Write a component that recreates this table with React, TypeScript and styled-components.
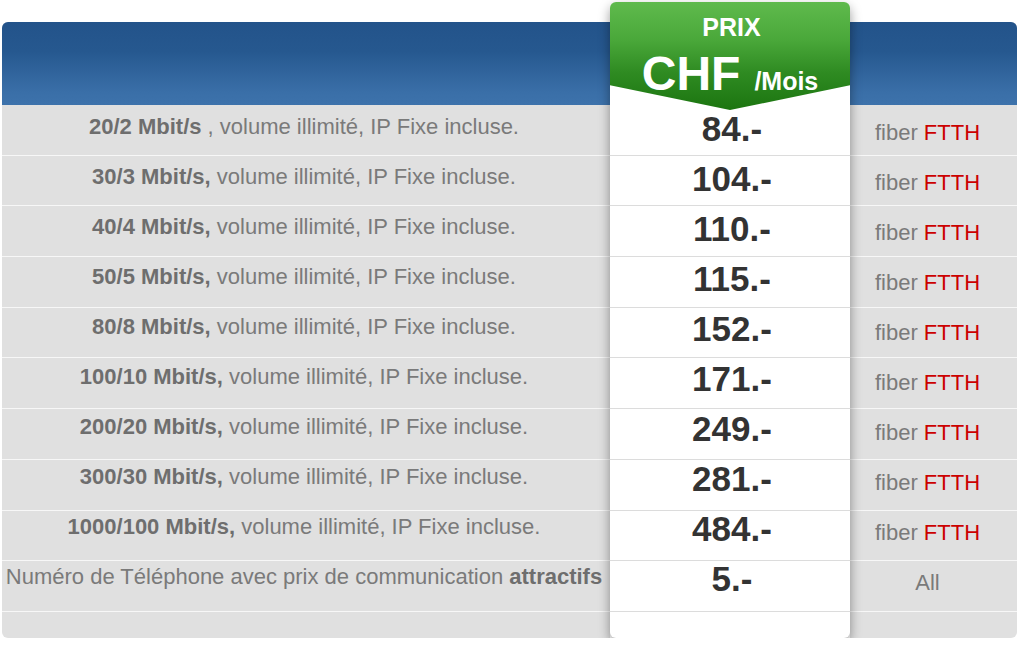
import React from "react";
import styled, { createGlobalStyle } from "styled-components";

const plans = [
  { speed: "20/2 Mbit/s", rest: " , volume illimité, IP Fixe incluse.", price: "84.-" },
  { speed: "30/3 Mbit/s,", rest: " volume illimité, IP Fixe incluse.", price: "104.-" },
  { speed: "40/4 Mbit/s,", rest: " volume illimité, IP Fixe incluse.", price: "110.-" },
  { speed: "50/5 Mbit/s,", rest: " volume illimité, IP Fixe incluse.", price: "115.-" },
  { speed: "80/8 Mbit/s,", rest: " volume illimité, IP Fixe incluse.", price: "152.-" },
  { speed: "100/10 Mbit/s,", rest: " volume illimité, IP Fixe incluse.", price: "171.-" },
  { speed: "200/20 Mbit/s,", rest: " volume illimité, IP Fixe incluse.", price: "249.-" },
  { speed: "300/30 Mbit/s,", rest: " volume illimité, IP Fixe incluse.", price: "281.-" },
  { speed: "1000/100 Mbit/s,", rest: " volume illimité, IP Fixe incluse.", price: "484.-" },
];

// text sits a little higher in each successive row
const drift = (base: number, i: number) => base - 1.4 * i;
const last = plans.length;

const App = () => {
  return (
    <>
      <GlobalStyle />
      <Page>
        <SideColumn $width={608} $side="left">
          <BlueHeader />
          {plans.map((p, i) => (
            <Cell key={p.speed} $shift={drift(-5, i)}>
              <span>
                <Strong>{p.speed}</Strong>
                {p.rest}
              </span>
            </Cell>
          ))}
          <Cell $shift={drift(-5, last)}>
            <span>
              Numéro de Téléphone avec prix de communication <Strong>attractifs</Strong>
            </span>
          </Cell>
          <FooterCell />
        </SideColumn>

        <PriceColumn>
          <PriceHeader>
            <PrixLabel>PRIX</PrixLabel>
            <CurrencyLine>
              <Currency>CHF</Currency>
              <Period>/Mois</Period>
            </CurrencyLine>
          </PriceHeader>
          {plans.map((p, i) => (
            <PriceCell key={p.price} $shift={drift(-2, i)}>
              {p.price}
            </PriceCell>
          ))}
          <PriceCell $shift={drift(-2, last)}>5.-</PriceCell>
          <PriceFooter />
        </PriceColumn>

        <SideColumn $width={167} $side="right">
          <BlueHeader />
          {plans.map((p, i) => (
            <Cell key={p.speed} $shift={drift(6, i)} $padRight={12}>
              <span>
                fiber <Red>FTTH</Red>
              </span>
            </Cell>
          ))}
          <Cell $shift={drift(6, last)} $padRight={12}>
            All
          </Cell>
          <FooterCell />
        </SideColumn>
      </Page>
    </>
  );
};

export default App;

// Styles

const GlobalStyle = createGlobalStyle`
  html, body {
    margin: 0;
    padding: 0;
    background: #fff;
  }
  body {
    font-family: "Liberation Sans", Arial, Helvetica, sans-serif;
  }
`;

const Page = styled.div`
  display: flex;
  align-items: flex-start;
  padding: 2px 0 0 2px;
  width: 1017px;
  box-sizing: border-box;
`;

const SideColumn = styled.div<{ $width: number; $side: "left" | "right" }>`
  width: ${(p) => p.$width}px;
  flex-shrink: 0;
  margin-top: 20px;
  background: #e0e0e0;
  overflow: hidden;
  border-radius: ${(p) => (p.$side === "left" ? "6px 0 0 6px" : "0 6px 6px 0")};
`;

const BlueHeader = styled.div`
  height: 83px;
  background: linear-gradient(to bottom, #23538a 0%, #26588f 35%, #3a6fa8 85%, #3d72ab 100%);
`;

const Cell = styled.div<{ $shift: number; $padRight?: number }>`
  height: 50.7px;
  box-sizing: border-box;
  border-bottom: 1px solid #f7f7f7;
  display: flex;
  align-items: center;
  justify-content: center;
  white-space: pre;
  font-size: 22px;
  color: #7a7a7a;
  padding-right: ${(p) => p.$padRight ?? 4}px;
  padding-top: ${(p) => (p.$shift > 0 ? p.$shift : 0)}px;
  padding-bottom: ${(p) => (p.$shift < 0 ? -p.$shift : 0)}px;
`;

const Strong = styled.b`
  font-weight: 700;
  color: #6e6e6e;
`;

const Red = styled.span`
  color: #cc0000;
`;

const FooterCell = styled.div`
  height: 26px;
`;

const PriceColumn = styled.div`
  position: relative;
  z-index: 2;
  width: 240px;
  flex-shrink: 0;
  background: #fff;
  border-radius: 6px;
  box-shadow: 0 5px 12px rgba(0, 0, 0, 0.4);
`;

const PriceHeader = styled.div`
  position: relative;
  z-index: 1;
  height: 108px;
  margin-bottom: -5px;
  box-sizing: border-box;
  padding-top: 13px;
  border-radius: 6px 6px 0 0;
  background: linear-gradient(to bottom, #5fba4d 0%, #4aa83a 35%, #2f8b22 65%, #1c7510 100%);
  clip-path: polygon(0 0, 100% 0, 100% 77%, 50% 100%, 0 77%);
  display: flex;
  flex-direction: column;
  align-items: center;
  color: #fff;
  font-weight: 700;
`;

const PrixLabel = styled.div`
  font-size: 25px;
  line-height: 25px;
  padding-left: 3px;
`;

const CurrencyLine = styled.div`
  display: flex;
  align-items: baseline;
  margin-top: 10px;
`;

const Currency = styled.span`
  font-size: 48px;
  line-height: 48px;
`;

const Period = styled.span`
  font-size: 25px;
  margin-left: 14px;
`;

const PriceCell = styled.div<{ $shift: number }>`
  height: 50.7px;
  box-sizing: border-box;
  border-bottom: 1px solid #dcdcdc;
  display: flex;
  align-items: center;
  justify-content: center;
  font-size: 35px;
  font-weight: 700;
  color: #333;
  padding-left: 4px;
  padding-bottom: ${(p) => -p.$shift}px;
`;

const PriceFooter = styled.div`
  height: 26px;
`;
